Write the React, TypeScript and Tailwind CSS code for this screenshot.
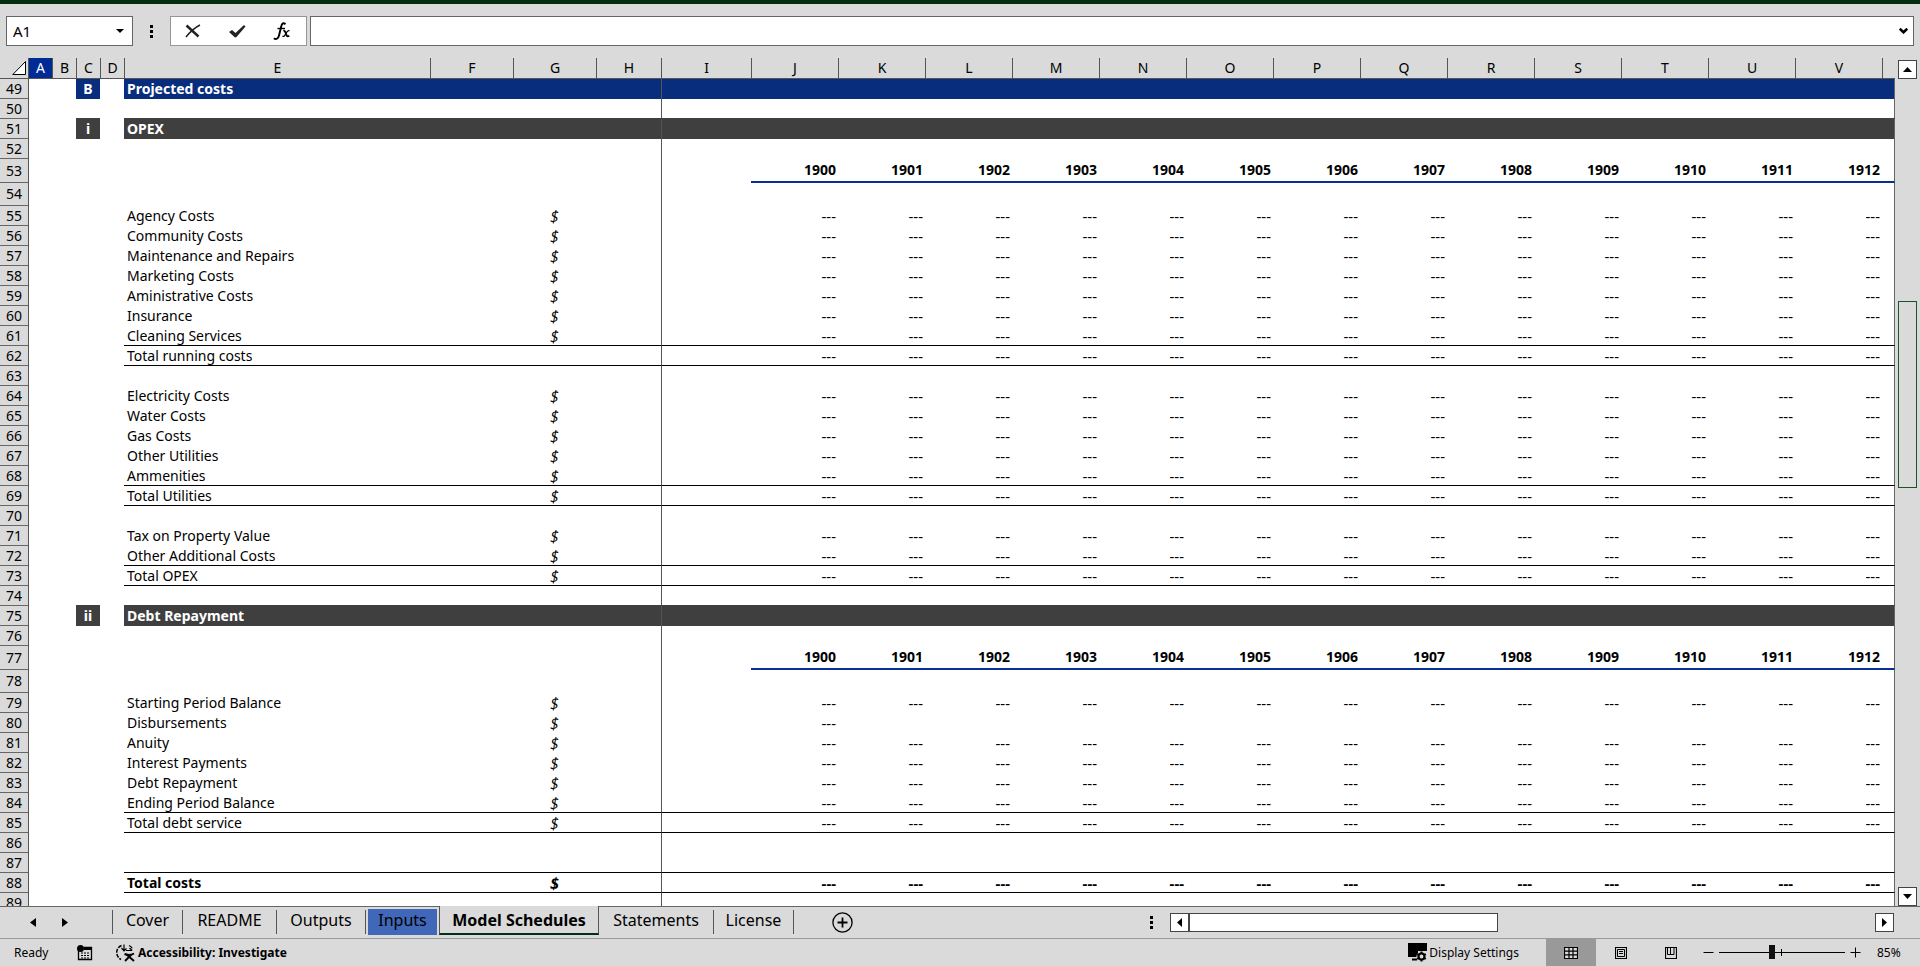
import { useState } from 'react'
import clsx from 'clsx'

type RowKind = 'blank' | 'section' | 'subsection' | 'years' | 'tall' | 'line'

interface SheetRow {
  n: number
  kind: RowKind
  badge?: string
  label?: string
  unit?: boolean
  values?: 'all' | 'first'
  ruled?: boolean
  bold?: boolean
}

const line = (n: number, label: string, extra: Partial<SheetRow> = {}): SheetRow => ({
  n,
  kind: 'line',
  label,
  unit: true,
  values: 'all',
  ...extra,
})
const blank = (n: number, extra: Partial<SheetRow> = {}): SheetRow => ({ n, kind: 'blank', ...extra })

const ROWS: SheetRow[] = [
  { n: 49, kind: 'section', badge: 'B', label: 'Projected costs' },
  blank(50),
  { n: 51, kind: 'subsection', badge: 'i', label: 'OPEX' },
  blank(52),
  { n: 53, kind: 'years' },
  { n: 54, kind: 'tall' },
  line(55, 'Agency Costs'),
  line(56, 'Community Costs'),
  line(57, 'Maintenance and Repairs'),
  line(58, 'Marketing Costs'),
  line(59, 'Aministrative Costs'),
  line(60, 'Insurance'),
  line(61, 'Cleaning Services', { ruled: true }),
  line(62, 'Total running costs', { unit: false, ruled: true }),
  blank(63),
  line(64, 'Electricity Costs'),
  line(65, 'Water Costs'),
  line(66, 'Gas Costs'),
  line(67, 'Other Utilities'),
  line(68, 'Ammenities', { ruled: true }),
  line(69, 'Total Utilities', { ruled: true }),
  blank(70),
  line(71, 'Tax on Property Value'),
  line(72, 'Other Additional Costs', { ruled: true }),
  line(73, 'Total OPEX', { ruled: true }),
  blank(74),
  { n: 75, kind: 'subsection', badge: 'ii', label: 'Debt Repayment' },
  blank(76),
  { n: 77, kind: 'years' },
  { n: 78, kind: 'tall' },
  line(79, 'Starting Period Balance'),
  line(80, 'Disbursements', { values: 'first' }),
  line(81, 'Anuity'),
  line(82, 'Interest Payments'),
  line(83, 'Debt Repayment'),
  line(84, 'Ending Period Balance', { ruled: true }),
  line(85, 'Total debt service', { ruled: true }),
  blank(86),
  blank(87, { ruled: true }),
  line(88, 'Total costs', { ruled: true, bold: true }),
  blank(89),
]

const LEAD_COLUMNS = ['A', 'B', 'C', 'D', 'E', 'F', 'G', 'H', 'I']
const YEAR_COLUMNS = ['J', 'K', 'L', 'M', 'N', 'O', 'P', 'Q', 'R', 'S', 'T', 'U', 'V']
const FIRST_YEAR = 1900

const ROW_HEIGHT: Record<RowKind, string> = {
  blank: 'h-5',
  section: 'h-5',
  subsection: 'h-5',
  line: 'h-5',
  years: 'h-6',
  tall: 'h-[23px]',
}

const FILL: Partial<Record<RowKind, string>> = {
  section: 'bg-[#082d7d] text-white font-bold',
  subsection: 'bg-[#3f3f3f] text-white font-bold shadow-[0_-1px_0_#3f3f3f]',
}

const TABS = [
  { name: 'Cover', width: 'w-[70px]' },
  { name: 'README', width: 'w-[94px]' },
  { name: 'Outputs', width: 'w-[89px]' },
  { name: 'Inputs', width: 'w-[74px]' },
  { name: 'Model Schedules', width: 'w-[160px]' },
  { name: 'Statements', width: 'w-[115px]' },
  { name: 'License', width: 'w-[80px]' },
]

function Row({ row }: { row: SheetRow }) {
  const fill = FILL[row.kind]
  const body = clsx('p-0', fill, row.ruled && 'border-b border-black', row.bold && 'font-bold')
  const yearBody = clsx(
    body,
    'pr-[2px] text-right',
    row.kind === 'years' ? 'border-b-2 border-[#0a2f93] font-bold' : 'text-[15px] leading-[18px]',
  )

  return (
    <tr className={ROW_HEIGHT[row.kind]}>
      <th scope="row" className="border-b border-[#666] bg-[#dadada] p-0 text-center font-normal">
        {row.n}
      </th>
      <td className="border-l border-[#555] p-0" />
      <td className="p-0" />
      <td className={clsx('p-0 text-center', fill)}>{row.badge}</td>
      <td className="p-0" />
      <td className={clsx(body, 'pl-[3px]')}>{row.label}</td>
      <td className={body} />
      <td className={clsx(body, 'text-center font-["Open_Sans",sans-serif] text-[16px] leading-[18px] italic')}>
        {row.unit && '$'}
      </td>
      <td className={body} />
      <td className={clsx(body, 'border-l border-l-[#555]')} />
      {YEAR_COLUMNS.map((col, i) => (
        <td key={col} className={yearBody}>
          {row.kind === 'years' && FIRST_YEAR + i}
          {(row.values === 'all' || (row.values === 'first' && i === 0)) && '---'}
        </td>
      ))}
      <td className={clsx(yearBody, 'border-r border-r-[#666]')} />
    </tr>
  )
}

function Sheet() {
  return (
    <table className="w-full table-fixed border-separate border-spacing-0 text-[14px] leading-[18px]">
      <colgroup>
        <col className="w-[28px]" />
        <col className="w-6" />
        <col className="w-6" />
        <col className="w-6" />
        <col className="w-6" />
        <col className="w-[306px]" />
        <col className="w-[83px]" />
        <col className="w-[83px]" />
        <col className="w-[65px]" />
        <col className="w-[90px]" />
        {YEAR_COLUMNS.map((col) => (
          <col key={col} className="w-[87px]" />
        ))}
        <col />
      </colgroup>
      <thead>
        <tr className="h-[21px]">
          <th className="border-b border-[#555] p-0" aria-label="Select all">
            <svg width="15" height="15" viewBox="0 0 15 15" className="ml-3 block">
              <path d="M13.500 0.500v13H0.800z" fill="#fff" stroke="#000" />
            </svg>
          </th>
          {[...LEAD_COLUMNS, ...YEAR_COLUMNS].map((col) => (
            <th
              key={col}
              scope="col"
              className={clsx(
                'border-b border-l border-[#555] p-0 text-center font-normal',
                col === 'A' && 'bg-[#002b95] text-white',
              )}
            >
              {col}
            </th>
          ))}
          <th className="border-b border-l border-[#555] p-0" />
        </tr>
      </thead>
      <tbody className="bg-white">
        {ROWS.map((row) => (
          <Row key={row.n} row={row} />
        ))}
      </tbody>
    </table>
  )
}

function Dots() {
  return (
    <svg width="3" height="13" viewBox="0 0 3 13" className="shrink-0">
      <path d="M0 0h3v3H0zM0 5h3v3H0zM0 10h3v3H0z" />
    </svg>
  )
}

function FormulaBar() {
  const [formula, setFormula] = useState('')

  return (
    <div className="flex px-[6px] py-3">
      <div className="flex h-[30px] w-[127px] items-center border border-[#666] bg-white">
        <input aria-label="Name box" defaultValue="A1" className="w-0 flex-1 pl-[6px] text-[15px] outline-none" />
        <button aria-label="Name box list" className="mr-2">
          <svg width="8" height="4" viewBox="0 0 8 4" className="block">
            <path d="M0 0h8L4 4z" />
          </svg>
        </button>
      </div>
      <div className="flex w-[37px] items-center justify-center">
        <Dots />
      </div>
      <div className="flex h-[30px] w-[137px] items-center border border-[#969696] bg-white pr-[2px]">
        <button aria-label="Cancel" className="flex flex-1 justify-center">
          <svg width="16" height="14" viewBox="0 0 16 14" fill="none" stroke="#222">
            <path d="M1.500 1.500 L13.500 12.500" strokeWidth="2.400" />
            <path d="M15 1 C10 3.500 5 8 1 13" strokeWidth="1.500" />
          </svg>
        </button>
        <button aria-label="Enter" className="flex flex-1 justify-center">
          <svg width="17" height="14" viewBox="0 0 17 14" fill="#222">
            <path d="M0 8 L3 6 L6.500 9 L15 1 L16.500 2.500 L7.500 13 L6 13.500 Z" />
          </svg>
        </button>
        <button aria-label="Insert function" className="flex flex-1 justify-center">
          <svg width="18" height="18" viewBox="0 0 18 18" fill="none" stroke="#000">
            <path d="M12.500 2.200 C10.500 0.300 9 1.200 8.200 4.500 L6 13.500 C5.200 17 3 17.800 0.800 16.200" strokeWidth="1.900" />
            <path d="M4.500 6.500h7.500" strokeWidth="1.400" />
            <path d="M10.300 8.700 C12 8.300 12.200 9.500 12.900 11.500 C13.600 14 14.200 15 16.200 13.700" strokeWidth="1.900" />
            <path d="M16.500 8.700 C14.500 8 13 11 12 13 C11.300 14.500 10.500 14.700 9.500 14" strokeWidth="1.300" />
          </svg>
        </button>
      </div>
      <div className="ml-[3px] flex h-[30px] flex-1 items-center border border-[#666] bg-white">
        <input
          aria-label="Formula"
          value={formula}
          onChange={(e) => setFormula(e.target.value)}
          className="w-0 flex-1 px-2 text-[15px] outline-none"
        />
        <button aria-label="Expand formula bar" className="mr-[5px]">
          <svg width="9" height="6" viewBox="0 0 9 6" className="block" fill="none" stroke="#000" strokeWidth="2.600">
            <path d="M0.700 0.700 L4.500 4.300 L8.300 0.700" />
          </svg>
        </button>
      </div>
    </div>
  )
}

interface ScrollButtonProps {
  label: string
  d: string
}

function ScrollButton({ label, d }: ScrollButtonProps) {
  return (
    <button
      aria-label={label}
      className="flex h-[19px] w-[19px] shrink-0 items-center justify-center border border-[#444] bg-white"
    >
      <svg width="9" height="9" viewBox="0 0 9 9">
        <path d={d} />
      </svg>
    </button>
  )
}

function VerticalScroll() {
  return (
    <div className="flex w-[25px] shrink-0 flex-col items-center pt-[2px]">
      <ScrollButton label="Scroll up" d="M0 7 L4.500 2 L9 7z" />
      <div className="flex w-full flex-1 flex-col items-center">
        <div className="grow-[223]" />
        <div className="w-[19px] grow-[185] border border-[#1a5427]" />
        <div className="grow-[400]" />
      </div>
      <ScrollButton label="Scroll down" d="M0 2 L4.500 7 L9 2z" />
    </div>
  )
}

function TabBar() {
  const [active, setActive] = useState('Model Schedules')
  const activeIndex = TABS.findIndex((tab) => tab.name === active)

  return (
    <div className="flex h-8 border-t border-[#666]">
      <div className="flex w-[112px] items-center gap-[26px] pl-[30px]">
        <button aria-label="Previous sheet">
          <svg width="6" height="9" viewBox="0 0 6 9" className="block">
            <path d="M6 0v9L0 4.500z" />
          </svg>
        </button>
        <button aria-label="Next sheet">
          <svg width="6" height="9" viewBox="0 0 6 9" className="block">
            <path d="M0 0v9l6-4.500z" />
          </svg>
        </button>
      </div>
      <div className="flex text-[16px] leading-5">
        {TABS.map(({ name, width }, i) =>
          name === active ? (
            <button
              key={name}
              className={clsx(
                width,
                '-mt-px h-[29px] border-x border-b-2 border-x-[#555] border-b-[#03301a] bg-[#dadada] font-bold',
              )}
            >
              {name}
            </button>
          ) : (
            <button
              key={name}
              onClick={() => setActive(name)}
              className={clsx(
                width,
                'mt-[3px] flex h-6 justify-center border-[#555]',
                i < activeIndex ? 'border-l' : 'border-r',
              )}
            >
              {name === 'Inputs' ? (
                <span className="-mt-px mx-[2px] h-[26px] flex-1 bg-[#4067b8] pt-px">{name}</span>
              ) : (
                name
              )}
            </button>
          ),
        )}
      </div>
      <button aria-label="New sheet" className="ml-[38px]">
        <svg width="21" height="21" viewBox="0 0 21 21" fill="none" stroke="#000" className="block">
          <circle cx="10.500" cy="10.500" r="9.600" strokeWidth="1.300" />
          <path d="M10.500 5.500v10M5.500 10.500h10" strokeWidth="1.800" />
        </svg>
      </button>
      <div className="flex-1" />
      <div className="mr-[26px] flex w-[744px] items-center">
        <Dots />
        <div className="ml-[17px] flex flex-1 items-center">
          <ScrollButton label="Scroll left" d="M7 0v9L2 4.500z" />
          <div className="h-[19px] w-[309px] border border-[#444] bg-white" />
          <div className="flex-1" />
          <ScrollButton label="Scroll right" d="M2 0v9l5-4.500z" />
        </div>
      </div>
    </div>
  )
}

function StatusBar() {
  const [zoom, setZoom] = useState(85)

  return (
    <div className="flex h-7 items-stretch border-t border-[#999] text-[12px]">
      <div className="flex flex-1 items-center pl-[14px]">
        <span className="w-[63px]">Ready</span>
        <button aria-label="Macro recording">
          <svg width="16" height="16" viewBox="0 0 16 16" className="block">
            <path d="M1.500 5v9.500h13V2.500H7" fill="none" stroke="#000" strokeWidth="1.300" />
            <path d="M7 2h8v3H7z" />
            <circle cx="3.500" cy="3.500" r="3.500" />
            <path d="M4 8h9M4 10.500h9M4 13h9" stroke="#000" strokeDasharray="2 1" />
          </svg>
        </button>
        <button className="ml-[23px] flex items-center gap-[3px] font-bold">
          <svg width="19" height="18" viewBox="0 0 19 18" fill="none" stroke="#000">
            <path d="M5.500 1.500 C-0.800 4 -0.800 12.500 5 15.500" strokeWidth="1.500" strokeDasharray="4 1.200" />
            <path d="M8 0.500 V6.500 M5.500 4 L8 6.800 L10.500 4.500 M10 6.500 H16 M13.500 4 L16.200 6.500" strokeWidth="1.200" />
            <path d="M13 1.500 C14.500 2.200 15.500 3 16.200 4.200" strokeWidth="1.200" />
            <path d="M8.500 10 C11.500 11.200 15 11.200 18 9.500 M10.500 10.500 L18 17 M15.500 10.500 L9 17" strokeWidth="1.900" />
          </svg>
          Accessibility: Investigate
        </button>
      </div>
      <button className="mr-[27px] flex items-center gap-[2px]">
        <svg width="19" height="19" viewBox="0 0 19 19">
          <path d="M0 0h19v8H10v6H0z" />
          <path d="M4 16.500h5" stroke="#000" strokeWidth="2" />
          <circle cx="13.500" cy="13.500" r="5" fill="#dadada" />
          <circle cx="13.500" cy="13.500" r="3" fill="none" stroke="#000" strokeWidth="2.200" />
          <path
            d="M13.500 8.500v2M13.500 16.500v2M9.200 11l1.700 1M16.100 15l1.700 1M9.200 16l1.700-1M16.100 12l1.700-1"
            stroke="#000"
            strokeWidth="2"
          />
        </svg>
        Display Settings
      </button>
      <button aria-label="Normal view" className="flex w-[50px] items-center justify-center bg-[#999]">
        <svg width="14" height="12" viewBox="0 0 14 12" className="bg-[#dadada]" fill="none" stroke="#000">
          <path d="M0.500 0.500h13v11H0.500zM5 0.500v11M9 0.500v11M0.500 4.200h13M0.500 7.800h13" strokeWidth="1.200" />
        </svg>
      </button>
      <button aria-label="Page layout view" className="flex w-[50px] items-center justify-center">
        <svg width="12" height="12" viewBox="0 0 12 12" fill="none" stroke="#000">
          <path d="M0.500 0.500h11v11H0.500z" strokeWidth="1.200" />
          <path d="M2.500 2.500h7v7h-7zM4 4.500h4M4 6.500h4" />
        </svg>
      </button>
      <button aria-label="Page break preview" className="flex w-[50px] items-center justify-center">
        <svg width="12" height="12" viewBox="0 0 12 12" fill="none" stroke="#000">
          <path d="M0.500 0.500h11v11H0.500z" strokeWidth="1.200" />
          <path d="M2.500 0.500v7M5.500 0.500v7M9 0.500v7M2.500 7.500h6.500" />
        </svg>
      </button>
      <div className="ml-[7px] flex items-center">
        <button aria-label="Zoom out" onClick={() => setZoom(Math.max(10, zoom - 5))}>
          <svg width="11" height="11" viewBox="0 0 11 11" className="block" stroke="#000">
            <path d="M0.500 5.500h10" />
          </svg>
        </button>
        <div className="relative mx-[5px] h-[14px] w-[126px]">
          <span className="absolute left-[62px] top-[3px] h-[7px] w-px bg-black" />
          <input
            type="range"
            aria-label="Zoom"
            min={10}
            max={190}
            value={zoom}
            onChange={(e) => setZoom(Number(e.target.value))}
            className="relative block h-[14px] w-full appearance-none bg-transparent [&::-webkit-slider-runnable-track]:h-px [&::-webkit-slider-runnable-track]:bg-black [&::-webkit-slider-thumb]:-mt-[7px] [&::-webkit-slider-thumb]:h-[14px] [&::-webkit-slider-thumb]:w-[6px] [&::-webkit-slider-thumb]:appearance-none [&::-webkit-slider-thumb]:bg-[#111]"
          />
        </div>
        <button aria-label="Zoom in" onClick={() => setZoom(Math.min(190, zoom + 5))}>
          <svg width="11" height="11" viewBox="0 0 11 11" className="block" stroke="#000">
            <path d="M0.500 5.500h10M5.500 0.500v10" />
          </svg>
        </button>
        <span className="w-[59px] pl-4">{zoom}%</span>
      </div>
    </div>
  )
}

export default function App() {
  return (
    <div className='flex h-screen flex-col border-t-4 border-[#022d0e] bg-[#dadada] font-["Noto_Sans",sans-serif] text-black'>
      <FormulaBar />
      <div className="flex min-h-0 flex-1">
        <div className="min-w-0 flex-1 overflow-hidden">
          <Sheet />
        </div>
        <VerticalScroll />
      </div>
      <TabBar />
      <StatusBar />
    </div>
  )
}
